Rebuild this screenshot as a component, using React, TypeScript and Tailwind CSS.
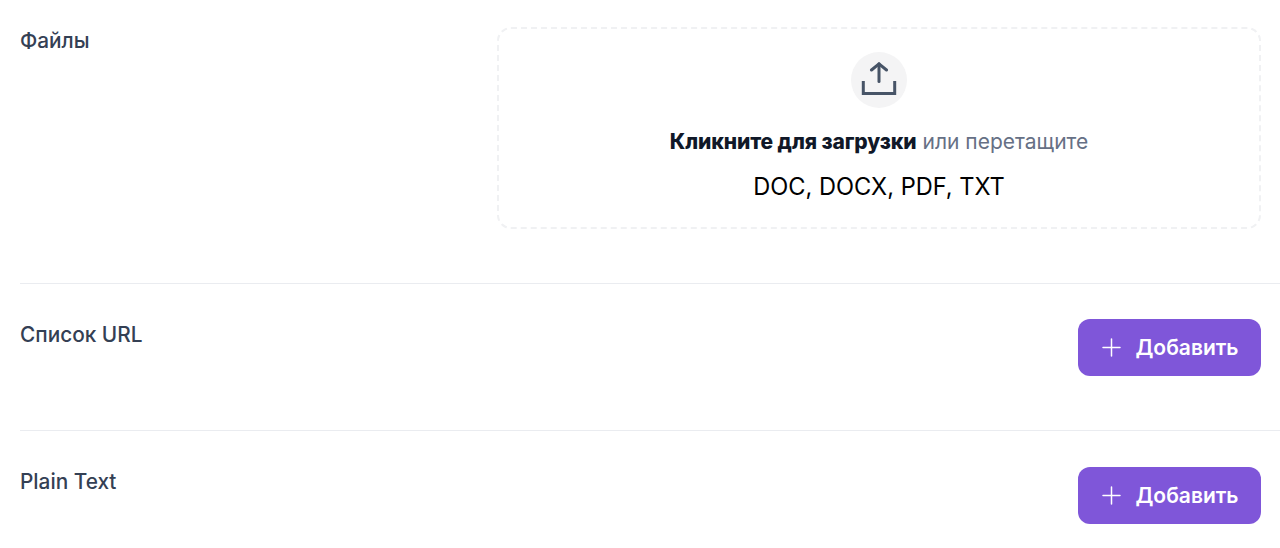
import React from 'react';

const AddButton = () => (
  <button className="flex h-[57px] w-[183px] items-center justify-center gap-[14px] rounded-[12px] bg-[#7F56D9] pl-[2px] text-[21px] font-semibold text-white">
    <svg width="19" height="19" viewBox="0 0 19 19" fill="none" stroke="currentColor" strokeWidth="1.5" strokeLinecap="round">
      <path d="M9.5 1v17" />
      <path d="M1 9.5h17" />
    </svg>
    <span className="pt-px">Добавить</span>
  </button>
);

const UploadIcon = () => (
  <svg width="36" height="36" viewBox="0 0 36 36" fill="none" stroke="#475467" strokeWidth="3" strokeLinecap="round" strokeLinejoin="round">
    <path d="M18 19.5V1.8" />
    <path d="M10.5 8L18 1.8 25.5 8" />
    <path d="M2.3 19V31.5H33.7V19" strokeLinecap="butt" strokeLinejoin="miter" />
  </svg>
);

export default function App() {
  return (
    <div className="h-[548px] w-[1280px] overflow-hidden bg-white pl-5 font-['Inter',sans-serif]">
      <div className="flex justify-between border-b border-[#EAECF0] pb-[54px] pr-[19px] pt-[27px]">
        <div className="text-[20.8px] font-medium leading-[28px] text-[#344054]">Файлы</div>
        <div className="flex h-[202px] w-[764px] flex-col items-center rounded-[14px] border-2 border-dashed border-[#F0F1F3] pt-[23px]">
          <div className="flex h-[56px] w-[56px] items-center justify-center rounded-full bg-[#F4F4F5]">
            <UploadIcon />
          </div>
          <div className="mt-[19.5px] text-[21px] leading-[28px] text-[#667085]">
            <span className="font-extrabold tracking-[-0.1px] text-[#101828]">Кликните для загрузки</span> или перетащите
          </div>
          <div className="mt-[17px] text-[23.6px] leading-[28px] text-black">DOC, DOCX, PDF, TXT</div>
        </div>
      </div>
      <div className="flex justify-between border-b border-[#EAECF0] pb-[54px] pr-[19px] pt-[35px]">
        <div className="mt-[2px] text-[20.8px] font-medium leading-[28px] text-[#344054]">Список URL</div>
        <AddButton />
      </div>
      <div className="flex justify-between pr-[19px] pt-[36px]">
        <div className="mt-px text-[20.8px] font-medium leading-[28px] text-[#344054]">Plain Text</div>
        <AddButton />
      </div>
    </div>
  );
}
